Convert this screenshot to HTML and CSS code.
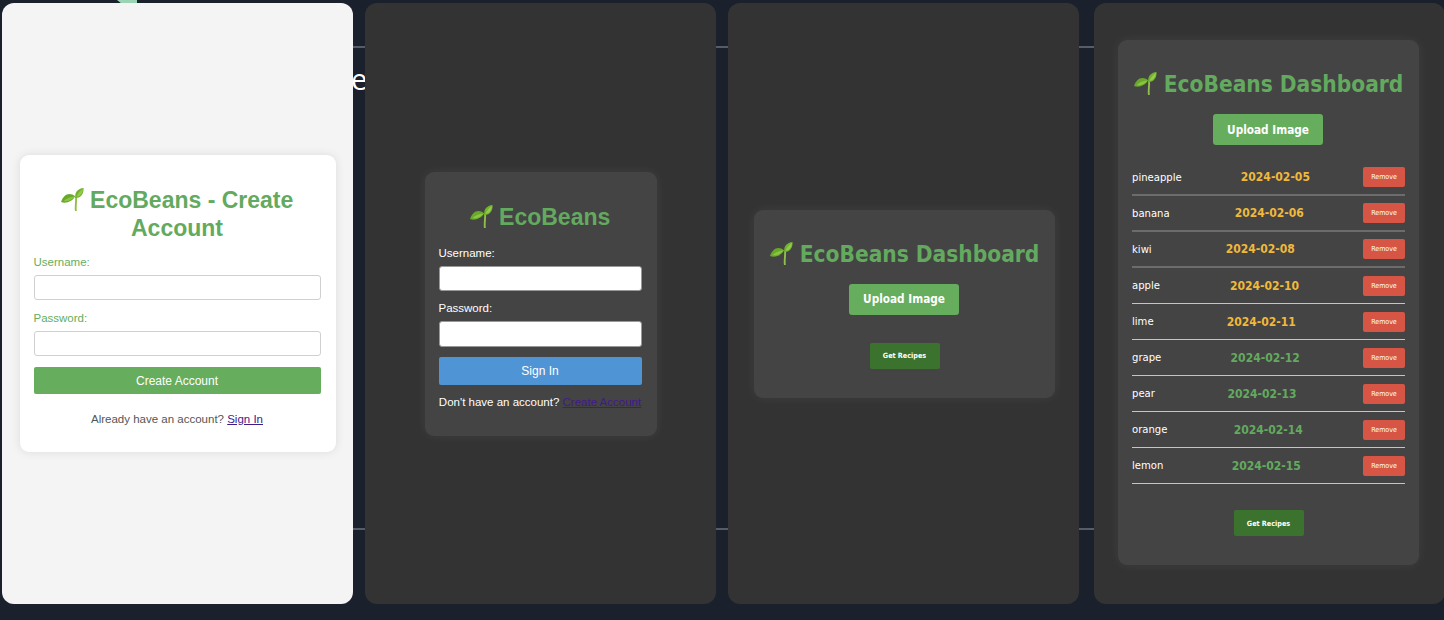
FILE: index.html
```html
<!DOCTYPE html>
<html lang="en">
  <head>
    <meta charset="UTF-8" />
    <meta name="viewport" content="width=device-width, initial-scale=1.0" />
    <title>EcoBeans</title>
    <link rel="stylesheet" href="styles.css">
  </head>
  <body>
    <!-- slide behind the screenshots -->
    <div class="backdrop">
      <div class="leaf-stub"></div>
      <div class="backdrop-frame"></div>
      <div class="backdrop-text">ex</div>
    </div>

    <svg class="defs" width="0" height="0">
      <symbol id="seedling" viewBox="0 0 22 22">
        <path d="M14.4 9.5C14.8 13 13.6 17.5 14.2 21.5" fill="none" stroke="#8fbf4a" stroke-width="1.8" stroke-linecap="round" />
        <path d="M0 13.5C2 6.5 8 3 13.5 8C11.5 12.5 5 15.5 0 13.5Z" fill="#68a92c" />
        <path d="M2.5 12.5C5 10 8.5 8.5 13 8.2C11 11 6.5 13.6 2.5 12.5Z" fill="#8cc63f" />
        <path d="M13.6 9.6C13 4 16 0.6 21.6 0C22 5 19 10 13.6 9.6Z" fill="#72b22e" />
        <path d="M14.8 8.6C16 5.5 18 3 21 0.8C21 4.5 18.6 8.2 14.8 8.6Z" fill="#93cc48" />
      </symbol>
    </svg>

    <div class="screens">
      <section class="panel panel-light">
        <div class="card card-light">
          <h1 class="title"><svg class="sprout"><use href="#seedling" /></svg> EcoBeans - Create Account</h1>
          <form class="form">
            <label class="label">Username:</label>
            <input class="input" type="text" />
            <label class="label">Password:</label>
            <input class="input" type="password" />
            <button class="btn-wide btn-green" type="button">Create Account</button>
          </form>
          <p class="switch">Already have an account? <a href="#">Sign In</a></p>
        </div>
      </section>

      <section class="panel">
        <div class="card card-signin">
          <h1 class="title"><svg class="sprout"><use href="#seedling" /></svg> EcoBeans</h1>
          <form class="form">
            <label class="label">Username:</label>
            <input class="input" type="text" />
            <label class="label">Password:</label>
            <input class="input" type="password" />
            <button class="btn-wide btn-blue" type="button">Sign In</button>
          </form>
          <p class="switch">Don't have an account? <a href="#">Create Account</a></p>
        </div>
      </section>

      <section class="panel panel-third">
        <div class="card card-dash">
          <h1 class="title"><svg class="sprout"><use href="#seedling" /></svg> EcoBeans Dashboard</h1>
          <button class="btn-upload" type="button">Upload Image</button>
          <button class="btn-recipes" type="button">Get Recipes</button>
        </div>
      </section>

      <section class="panel panel-last">
        <div class="card card-dash">
          <h1 class="title"><svg class="sprout"><use href="#seedling" /></svg> EcoBeans Dashboard</h1>
          <button class="btn-upload" type="button">Upload Image</button>
          <ul class="items">
            <li class="item item-dim"><span>pineapple</span><b class="date date-soon">2024-02-05</b><button class="btn-remove" type="button">Remove</button></li>
            <li class="item item-dim"><span>banana</span><b class="date date-soon">2024-02-06</b><button class="btn-remove" type="button">Remove</button></li>
            <li class="item item-dim"><span>kiwi</span><b class="date date-soon">2024-02-08</b><button class="btn-remove" type="button">Remove</button></li>
            <li class="item"><span>apple</span><b class="date date-soon">2024-02-10</b><button class="btn-remove" type="button">Remove</button></li>
            <li class="item"><span>lime</span><b class="date date-soon">2024-02-11</b><button class="btn-remove" type="button">Remove</button></li>
            <li class="item"><span>grape</span><b class="date">2024-02-12</b><button class="btn-remove" type="button">Remove</button></li>
            <li class="item"><span>pear</span><b class="date">2024-02-13</b><button class="btn-remove" type="button">Remove</button></li>
            <li class="item"><span>orange</span><b class="date">2024-02-14</b><button class="btn-remove" type="button">Remove</button></li>
            <li class="item"><span>lemon</span><b class="date">2024-02-15</b><button class="btn-remove" type="button">Remove</button></li>
          </ul>
          <button class="btn-recipes btn-recipes-list" type="button">Get Recipes</button>
        </div>
      </section>
    </div>
  </body>
</html>
```

FILE: styles.css
```css
html,
body {
  height: 100%;
}
body {
  margin: 0;
  position: relative;
  overflow: hidden;
  background: #1a202c;
  font-family: "Liberation Sans", sans-serif;
  color: #fff;
}
.defs {
  position: absolute;
}

/* Backdrop */
.backdrop {
  position: absolute;
  inset: 0;
}
.backdrop-frame {
  position: absolute;
  left: 120px;
  right: 0;
  top: 46px;
  height: 480px;
  border-top: 2px solid #565c68;
  border-bottom: 2px solid #565c68;
}
.backdrop-text {
  position: absolute;
  left: 351px;
  top: 61px;
  font-family: "Open Sans", sans-serif;
  font-size: 29px;
  font-weight: 400;
  line-height: 36px;
}
.leaf-stub {
  position: absolute;
  left: 117px;
  top: 0;
  width: 20px;
  height: 4px;
  background: #9ad4b4;
  clip-path: polygon(0 0, 100% 0, 100% 100%, 25% 100%);
}

/* Screens */
.screens {
  position: relative;
  display: flex;
  gap: 12px;
  padding: 3px 0 0 2px;
}
.panel {
  flex: 0 0 351px;
  height: 601px;
  box-sizing: border-box;
  display: flex;
  align-items: center;
  justify-content: center;
  background: #333;
  border-radius: 12px;
}
.panel-light {
  background: #f4f4f4;
}
.panel-third .card {
  margin-left: 2px;
}
.panel-last {
  margin-left: 3px;
}
.panel-last .card {
  margin-right: 2px;
  margin-bottom: 2px;
}

/* Cards */
.card {
  box-sizing: border-box;
  background: #444;
  border-radius: 9px;
  padding: 15px 15px 15px 14px;
  box-shadow: 0 0 12px rgba(255, 255, 255, 0.06);
}
.card-light {
  width: 316px;
  background: #fff;
  color: #66ad5e;
  box-shadow: 0 0 10px rgba(0, 0, 0, 0.1);
}
.card-signin {
  width: 232px;
}
.card-dash {
  width: 301px;
  padding: 15px 14px;
  display: flex;
  flex-direction: column;
  align-items: center;
  font-family: "DejaVu Sans", sans-serif;
  font-stretch: condensed;
}
.title {
  margin: 16px 0 13px;
  font-size: 23px;
  line-height: 28px;
  font-weight: bold;
  text-align: center;
  color: #63aa5f;
}
.card-signin .title {
  margin-bottom: 15px;
}
.card-dash .title {
  margin: 15px 0 16px;
  font-size: 22.5px;
  white-space: nowrap;
}
.sprout {
  width: 23px;
  height: 23px;
  vertical-align: -3px;
}

/* Forms */
.form {
  display: flex;
  flex-direction: column;
}
.label {
  font-size: 11.5px;
  line-height: 15px;
  margin-bottom: 5px;
}
.input {
  box-sizing: border-box;
  height: 25px;
  margin-bottom: 11px;
  background: #fff;
  border: 1px solid #d0d0d0;
  border-radius: 3px;
}
.card-signin .input {
  height: 25.5px;
  margin-bottom: 10px;
  border-color: #999;
}
.btn-wide {
  height: 27px;
  border: none;
  border-radius: 2px;
  color: #fff;
  font-family: inherit;
  font-size: 12px;
}
.btn-green {
  background: #66ad5e;
}
.btn-blue {
  height: 28px;
  margin-top: 0.5px;
  background: #4f95d6;
}
.switch {
  margin: 18px 0 10px;
  font-size: 11.5px;
  line-height: 15px;
  text-align: center;
  white-space: nowrap;
}
.card-light .switch {
  color: #555;
}
.card-signin .switch {
  margin-top: 10px;
  margin-bottom: 10.5px;
}
.switch a {
  color: #3f1a8a;
}

/* Dashboard */
.btn-upload {
  width: 110px;
  height: 31px;
  margin-right: 1px;
  border: none;
  border-radius: 3px;
  background: #66ad5e;
  color: #fff;
  font-family: inherit;
  font-stretch: condensed;
  font-size: 11.7px;
  font-weight: bold;
}
.btn-recipes {
  width: 70px;
  height: 26px;
  margin: 28px 0 14px;
  border: none;
  border-radius: 2px;
  background: #3b722e;
  color: #fff;
  font-family: inherit;
  font-stretch: condensed;
  font-size: 7.2px;
  font-weight: bold;
}
.btn-recipes-list {
  margin-top: 26px;
}
.items {
  width: 100%;
  margin: 15px 0 0;
  padding: 0;
  list-style: none;
}
.item {
  display: flex;
  align-items: center;
  justify-content: space-between;
  height: 36px;
  box-sizing: border-box;
  border-bottom: 1px solid #c4c4c4;
  font-size: 11.2px;
}
.item-dim {
  border-bottom: 2px solid #6c6c6c;
}
.date {
  margin-left: 6px;
  font-size: 12px;
  color: #63aa5f;
}
.date-soon {
  color: #f0b93a;
}
.btn-remove {
  width: 42px;
  height: 20px;
  padding: 0;
  border: none;
  border-radius: 2px;
  background: #d65545;
  color: #fff;
  font-family: inherit;
  font-stretch: condensed;
  font-size: 7px;
}
```
